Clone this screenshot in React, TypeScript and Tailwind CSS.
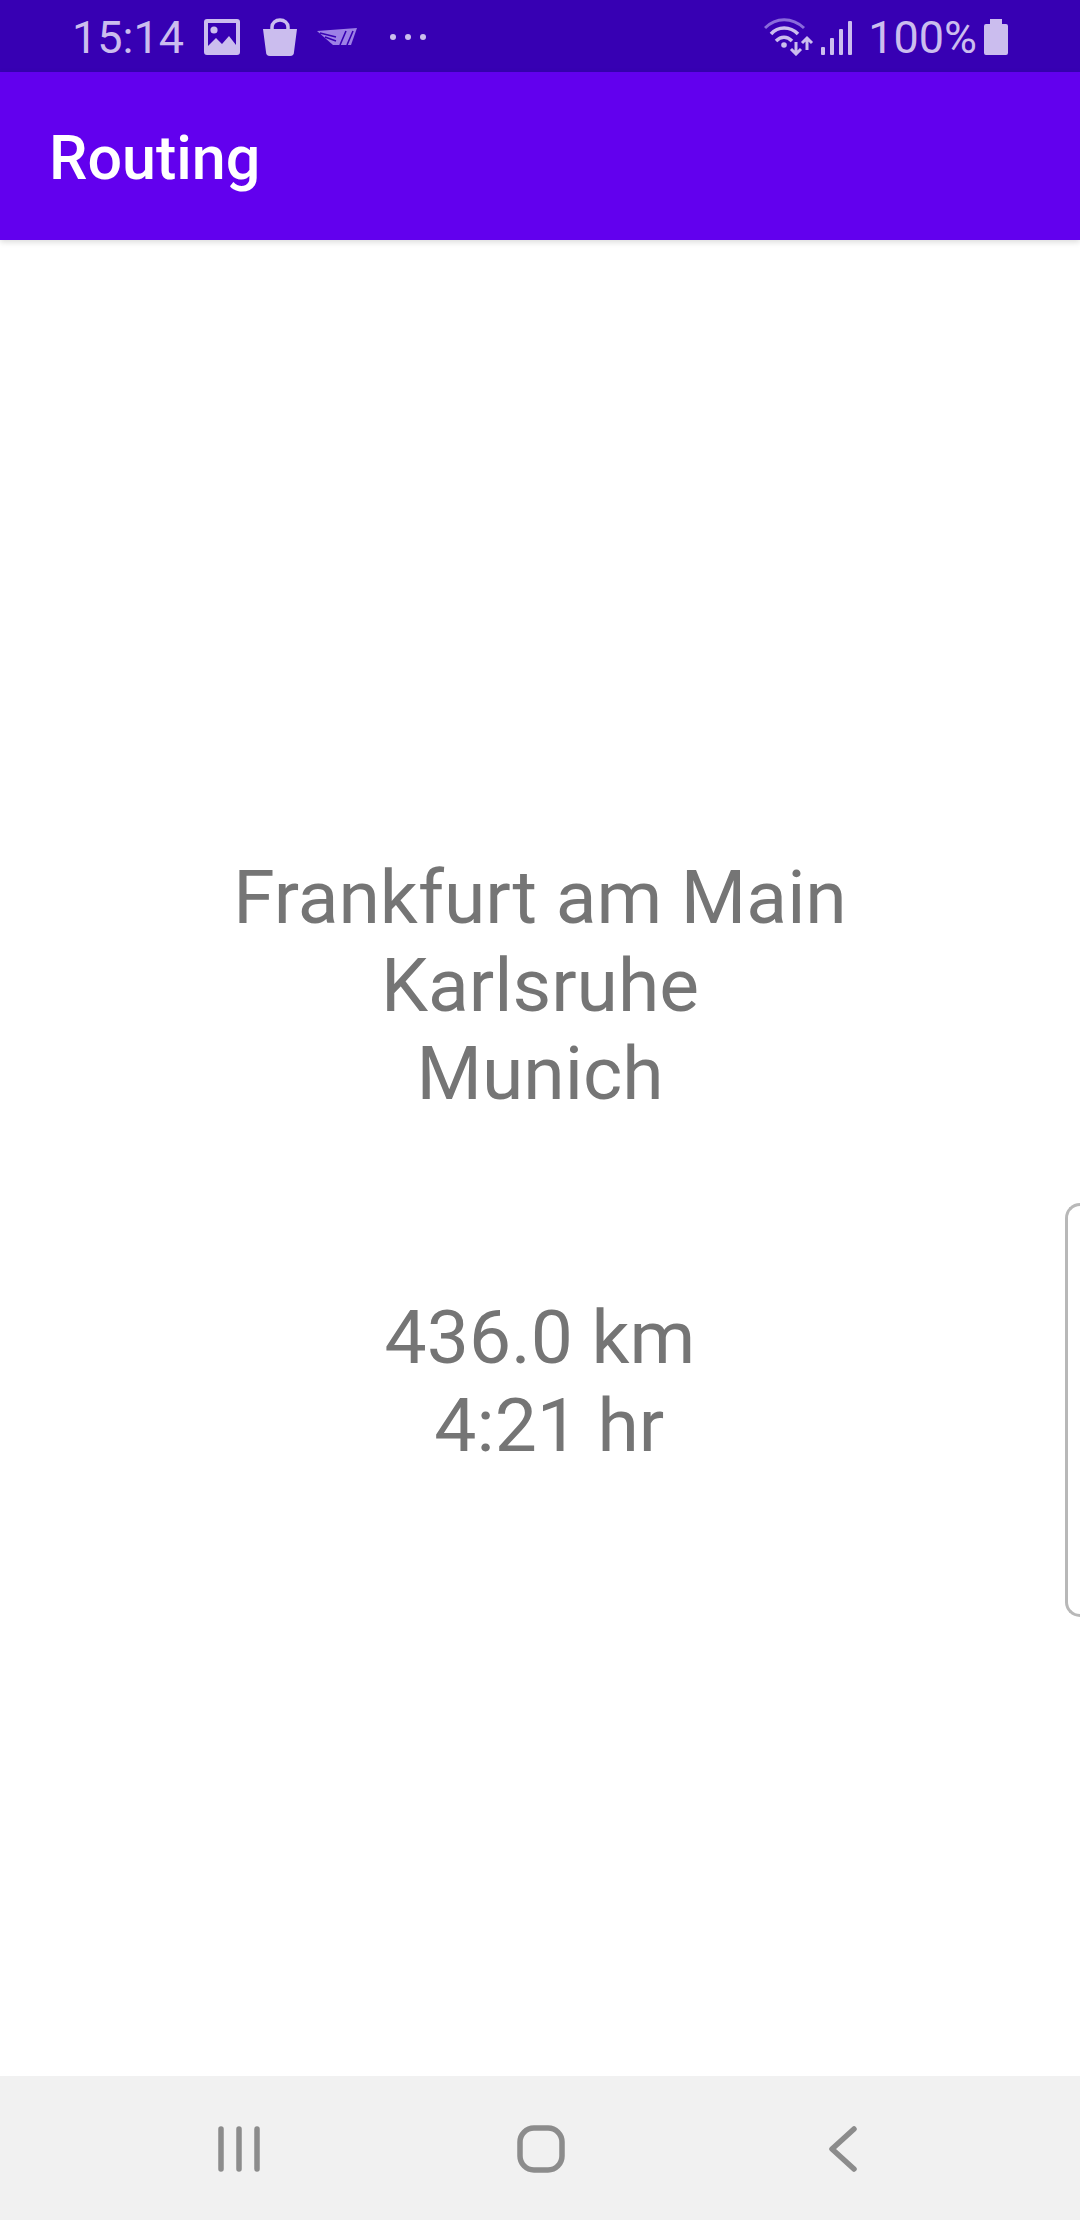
import React from 'react';

const ImageIcon = () => (
  <svg width="36" height="36" viewBox="0 0 36 36" className="ml-[20px]">
    <path fillRule="evenodd" d="M3 0h30a3 3 0 0 1 3 3v30a3 3 0 0 1-3 3H3a3 3 0 0 1-3-3V3a3 3 0 0 1 3-3zM4 4v23l8-8 6 6 7-8 7 9V4z" fill="#cbbdee" />
    <circle cx="10" cy="11" r="3.6" fill="#cbbdee" />
  </svg>
);

const BagIcon = () => (
  <svg width="36" height="38" viewBox="0 0 36 38" className="ml-[22px]">
    <path d="M1 11h34l-3 23a4 4 0 0 1-4 4H8a4 4 0 0 1-4-4z" fill="#cbbdee" />
    <path d="M10 12V9a8 7 0 0 1 16 0v3" fill="none" stroke="#cbbdee" strokeWidth="3.5" />
  </svg>
);

const WingLogo = () => (
  <svg width="40" height="18" viewBox="0 0 40 18" className="ml-[19px]">
    <path d="M0 3 L40 0 L34 17 L16 17 Z" fill="#9d80e6" />
    <path d="M3 5 L19 9 M8 9 L19 13 M23 17 L29 3 M30 17 L36 3" stroke="#3700b3" strokeWidth="1.6" fill="none" />
  </svg>
);

const WifiIcon = () => (
  <svg width="50" height="38" viewBox="0 0 50 38">
    <path d="M1 10 C12 -1 28 -1 40 10" fill="none" stroke="#8a6bdb" strokeWidth="3" />
    <path d="M7 16 C14 8 26 8 34 16" fill="none" stroke="#cbbdee" strokeWidth="3.5" />
    <path d="M12 23 C17 18 23 18 28 23" fill="none" stroke="#cbbdee" strokeWidth="3.5" />
    <circle cx="20" cy="27" r="2.8" fill="#cbbdee" />
    <path d="M32 24v12M27 31l5 5 5-5" fill="none" stroke="#cbbdee" strokeWidth="3" />
    <path d="M43 32V20M38 25l5-5 5 5" fill="none" stroke="#cbbdee" strokeWidth="3" />
  </svg>
);

const SignalIcon = () => (
  <svg width="32" height="36" viewBox="0 0 32 36" className="ml-[7px]">
    <rect x="0" y="28" width="4" height="8" rx="1" fill="#cbbdee" />
    <rect x="9" y="19" width="4" height="17" rx="1" fill="#cbbdee" />
    <rect x="18" y="10" width="4" height="26" rx="1" fill="#cbbdee" />
    <rect x="27" y="2" width="4" height="34" rx="1" fill="#cbbdee" />
  </svg>
);

const BatteryIcon = () => (
  <svg width="24" height="36" viewBox="0 0 24 36" className="ml-[7px]">
    <path d="M6 0h12v5h4a2 2 0 0 1 2 2v27a2 2 0 0 1-2 2H2a2 2 0 0 1-2-2V7a2 2 0 0 1 2-2h4z" fill="#cbbdee" />
  </svg>
);

const StatusBar = () => (
  <div className="h-[72px] bg-[#3700b3] flex items-center pl-[72px] pr-[72px] pt-[2px] text-[#cbbdee] text-[45px] leading-none">
    <span>15:14</span>
    <ImageIcon />
    <BagIcon />
    <WingLogo />
    <div className="flex gap-[9px] ml-[33px]">
      <span className="w-[6px] h-[6px] rounded-full bg-[#cbbdee]" />
      <span className="w-[6px] h-[6px] rounded-full bg-[#cbbdee]" />
      <span className="w-[6px] h-[6px] rounded-full bg-[#cbbdee]" />
    </div>
    <div className="ml-auto flex items-center">
      <WifiIcon />
      <SignalIcon />
      <span className="ml-[15px]">100%</span>
      <BatteryIcon />
    </div>
  </div>
);

const NavBar = () => (
  <div className="h-[144px] bg-[#f1f1f1] flex items-center pl-[218px] pt-[2px] shrink-0">
    <svg width="42" height="46" viewBox="0 0 42 46">
      <path d="M3 3v40M21 3v40M39 3v40" stroke="#8c8c8c" strokeWidth="5.5" strokeLinecap="round" />
    </svg>
    <svg width="48" height="48" viewBox="0 0 48 48" className="ml-[257px]">
      <rect x="3" y="3" width="42" height="42" rx="14" fill="none" stroke="#8c8c8c" strokeWidth="5.5" />
    </svg>
    <svg width="30" height="46" viewBox="0 0 30 46" className="ml-[263px]">
      <path d="M26 3L4 23l22 20" fill="none" stroke="#8c8c8c" strokeWidth="5.5" strokeLinecap="round" strokeLinejoin="round" />
    </svg>
  </div>
);

export default function App() {
  return (
    <div className="relative w-[1080px] h-[2220px] flex flex-col bg-white font-['Roboto',sans-serif] overflow-hidden">
      <StatusBar />
      <div className="h-[168px] bg-[#6200ee] flex items-center pl-[49px] pt-[6px] shrink-0 shadow-[0_2px_6px_rgba(0,0,0,0.15)] z-10">
        <h1 className="text-white text-[61px] font-medium">Routing</h1>
      </div>
      <main className="flex-1 flex items-center justify-center pt-[6px]">
        <p className="text-[75px] leading-[88px] text-[#757575] text-center whitespace-pre">
          {'Frankfurt am Main\nKarlsruhe\nMunich\n\n\n436.0 km\n 4:21 hr'}
        </p>
      </main>
      <NavBar />
      <div className="absolute right-0 top-[1203px] w-[15px] h-[414px] rounded-l-[18px] border-[3px] border-r-0 border-[#b8b8b8]" />
    </div>
  );
}
